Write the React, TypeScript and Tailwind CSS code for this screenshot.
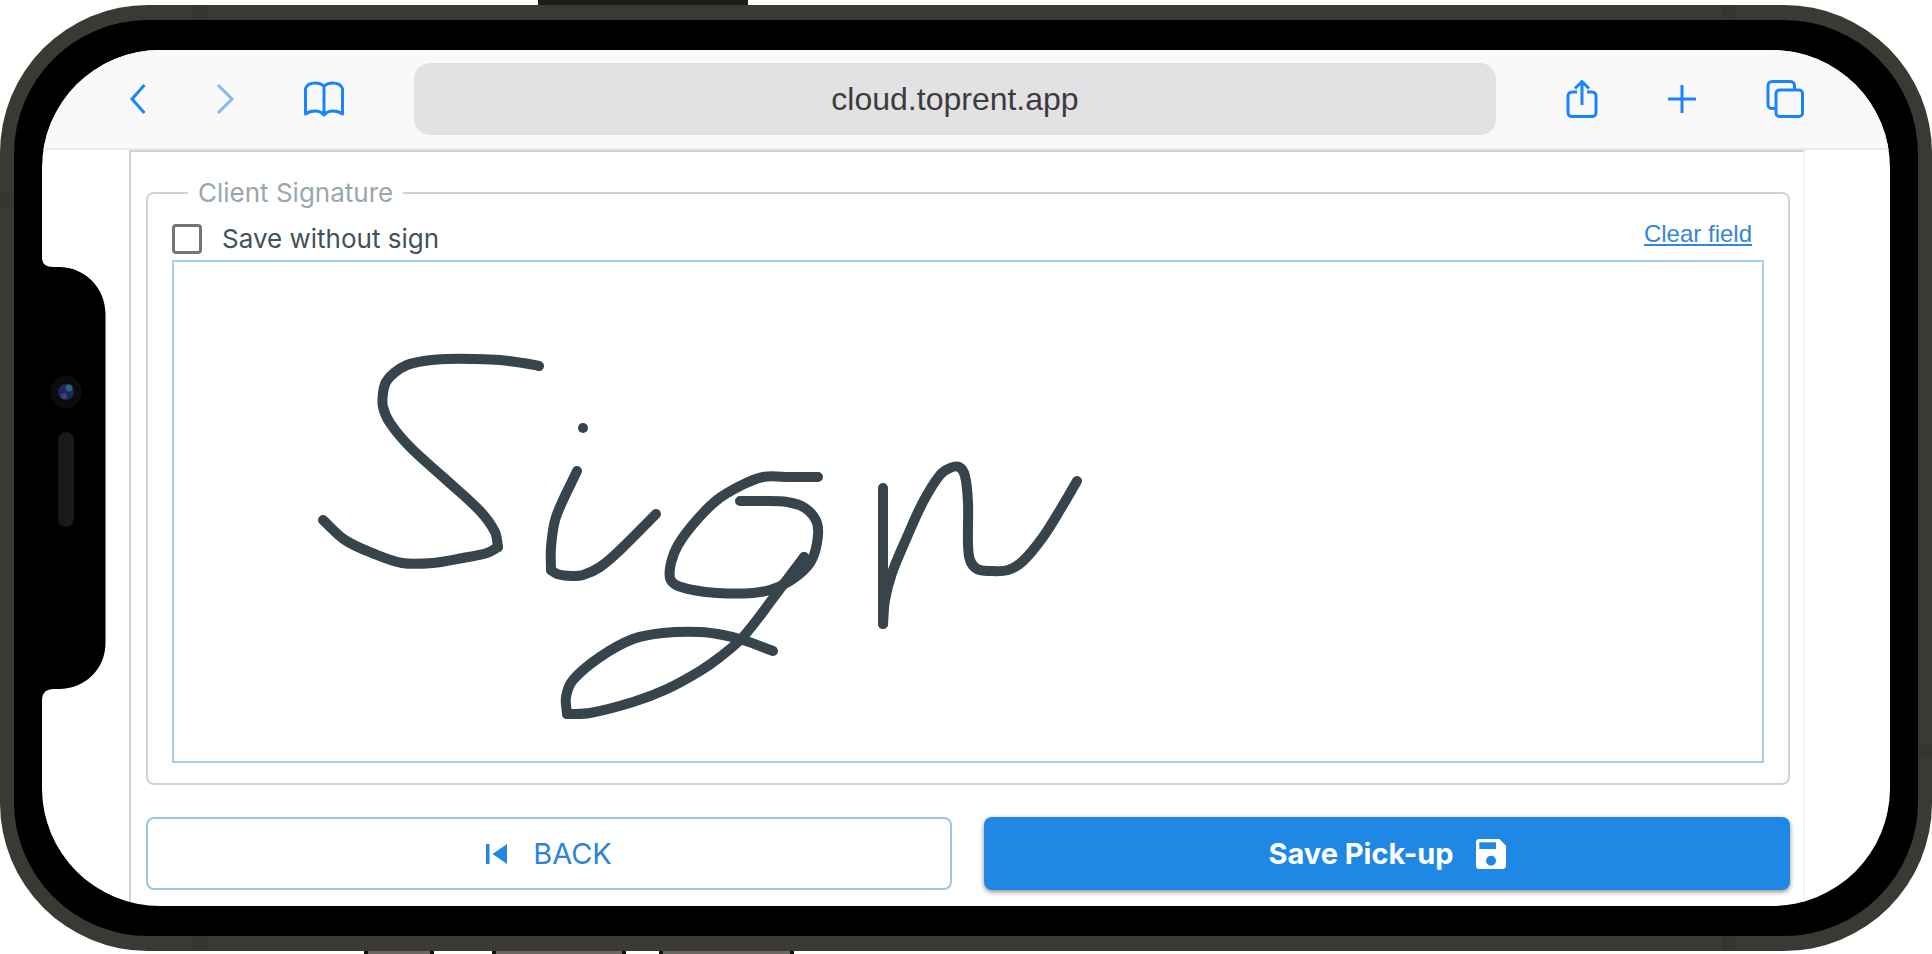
import React from "react";

type Point = [number, number];

const strokes: Point[][] = [
  [[539, 366], [523, 363], [500, 360], [473, 359], [447, 359], [424, 361], [407, 365], [394, 373], [386, 382], [383, 393], [383, 407], [390, 423], [410, 447], [443, 477], [480, 511], [495, 532], [498, 547]],
  [[498, 547], [487, 553], [463, 558], [433, 563], [402, 563], [372, 553], [345, 540], [323, 520]],
  [[577, 471], [556, 517], [551, 547], [551, 570]],
  [[551, 570], [557, 574], [572, 576], [583, 575], [600, 567], [620, 550], [656, 514]],
  [[818, 477], [790, 477], [763, 477], [740, 486], [717, 500], [695, 522], [678, 545], [671, 563], [670, 578], [676, 585], [693, 590], [717, 593], [753, 593], [773, 589], [793, 579], [810, 563], [817, 543], [817, 523], [805, 508], [787, 502], [763, 501], [740, 501]],
  [[804, 557], [774, 597], [743, 637], [720, 657], [700, 671], [667, 689], [633, 702], [590, 713], [567, 714]],
  [[804, 557], [795, 574], [782, 585]],
  [[567, 714], [566, 697], [573, 680], [600, 657], [633, 639], [663, 633], [700, 632], [723, 635], [743, 640], [773, 651]],
  [[883, 488], [883, 624]],
  [[883, 624], [885, 600], [892, 573], [907, 537], [923, 502], [940, 475], [950, 468], [959, 467], [965, 476], [968, 503], [968, 543], [970, 560], [977, 569], [990, 571], [1008, 570], [1023, 561], [1043, 537], [1060, 510], [1077, 481]],
];

function toPath(points: Point[]): string {
  let d = `M${points[0][0]} ${points[0][1]}`;
  for (let i = 0; i < points.length - 1; i++) {
    const a = points[Math.max(i - 1, 0)];
    const b = points[i];
    const c = points[i + 1];
    const e = points[Math.min(i + 2, points.length - 1)];
    const len = Math.hypot(c[0] - b[0], c[1] - b[1]);
    const t1 = len / (Math.hypot(c[0] - a[0], c[1] - a[1]) || 1) / 3;
    const t2 = len / (Math.hypot(e[0] - b[0], e[1] - b[1]) || 1) / 3;
    d += `C${b[0] + (c[0] - a[0]) * t1} ${b[1] + (c[1] - a[1]) * t1} ${c[0] - (e[0] - b[0]) * t2} ${c[1] - (e[1] - b[1]) * t2} ${c[0]} ${c[1]}`;
  }
  return d;
}

function Signature() {
  return (
    <svg
      role="img"
      aria-label="Signature"
      className="block h-full w-full"
      viewBox="174 262 1588 499"
      preserveAspectRatio="xMinYMin meet"
      fill="none"
      stroke="#37444b"
      strokeWidth="10"
      strokeLinecap="round"
      strokeLinejoin="round"
    >
      {strokes.map((points, i) => (
        <path key={i} d={toPath(points)} />
      ))}
      <circle cx="583" cy="428" r="5" fill="#37444b" stroke="none" />
    </svg>
  );
}

function Toolbar() {
  return (
    <header className="flex h-[100px] items-center gap-[70px] border-b-2 border-[#e9eaea] bg-[#f9f9f9] pr-[86px] pl-[88px] text-[#1a84ff]">
      <button aria-label="Back">
        <svg className="block h-[30px] w-4" viewBox="0 0 16 30" fill="none" stroke="currentColor" strokeWidth="3">
          <path d="M14.500 1 2 15l12.500 14" />
        </svg>
      </button>
      <button aria-label="Forward" className="text-[#80b9fb]">
        <svg className="block h-[30px] w-[18px]" viewBox="0 0 18 30" fill="none" stroke="currentColor" strokeWidth="3">
          <path d="M2 1 16 15 2 29" />
        </svg>
      </button>
      <button aria-label="Bookmarks">
        <svg className="block h-9 w-10" viewBox="0 0 40 36" fill="none" stroke="currentColor" strokeWidth="3" strokeLinejoin="round">
          <path d="M20 5.500C18 3 14.500 2 11 2 6.500 2 3 4 1.500 7.500V33c2.500-1.800 6-3 9.500-3s7 1.500 9 4c2-2.500 5.500-4 9-4s7 1.200 9.500 3V7.500C37 4 33.500 2 29 2s-7 1-9 3.500ZM20 5.500V33" />
        </svg>
      </button>
      <input
        type="text"
        aria-label="Address"
        defaultValue="cloud.toprent.app"
        className="h-[72px] min-w-0 flex-1 rounded-2xl bg-[#e2e2e4] text-center font-['Liberation_Sans',sans-serif] text-[32px] text-[#3c3c3d]"
      />
      <button aria-label="Share">
        <svg className="block h-10 w-8" viewBox="0 0 32 40" fill="none" stroke="currentColor" strokeWidth="3">
          <path d="M11 13H6a4 4 0 0 0-4 4v16.500a4 4 0 0 0 4 4h20a4 4 0 0 0 4-4V17a4 4 0 0 0-4-4h-5" />
          <path d="M16 26V2.500M9 9.500l7-7 7 7" />
        </svg>
      </button>
      <button aria-label="New tab">
        <svg className="block h-7 w-7" viewBox="0 0 28 28" fill="none" stroke="currentColor" strokeWidth="3">
          <path d="M14 0v28M0 14h28" />
        </svg>
      </button>
      <button aria-label="Tabs">
        <svg className="block h-10 w-[38px]" viewBox="0 0 38 40" fill="none" stroke="currentColor" strokeWidth="3">
          <rect x="10" y="11" width="26.500" height="26.500" rx="3.500" />
          <path d="M10 29.500H6a4 4 0 0 1-4-4V6.500a4 4 0 0 1 4-4h18.500a4 4 0 0 1 4 4V11" />
        </svg>
      </button>
    </header>
  );
}

function Notch() {
  return (
    <svg aria-hidden="true" className="absolute top-[209px] left-0 h-[440px] w-16" viewBox="0 0 64 440">
      <path
        d="M-1 0H0Q1 8 11 8H17C43 8 63.500 29 63.500 55V384C63.500 410 43 430 17 430H11Q1 430 0 440H-1Z"
        fill="#000"
      />
      <circle cx="24" cy="133" r="16" fill="#0c0c0d" />
      <circle cx="24" cy="133" r="8" fill="#152c54" />
      <circle cx="27" cy="129" r="3.500" fill="#2b5f8a" />
      <circle cx="22" cy="137" r="3" fill="#4c3a80" />
      <rect x="16" y="173" width="16" height="95" rx="8" fill="#191919" />
    </svg>
  );
}

export default function App() {
  return (
    <div className="min-h-screen overflow-hidden bg-white pt-[5px] pb-[3px] font-[Inter,sans-serif]">
      <div className="relative rounded-[148px] bg-[#3a3933] px-[14px] py-[15px]">
        <span className="absolute -top-[5px] left-[538px] h-[5px] w-[210px] bg-[#1c1c1c]" />
        <span className="absolute -bottom-[3px] left-[364px] h-[3px] w-[70px] border-x-4 border-[#111] bg-[#6b6762]" />
        <span className="absolute -bottom-[3px] left-[492px] h-[3px] w-[134px] border-x-4 border-[#111] bg-[#6b6762]" />
        <span className="absolute -bottom-[3px] left-[659px] h-[3px] w-[135px] border-x-4 border-[#111] bg-[#6b6762]" />
        <span className="absolute top-0 left-[193px] h-[15px] w-[14px] bg-[#353630]" />
        <span className="absolute top-0 right-[196px] h-[15px] w-[14px] bg-[#353630]" />
        <span className="absolute bottom-0 left-[193px] h-[15px] w-[14px] bg-[#353630]" />
        <span className="absolute right-[196px] bottom-0 h-[15px] w-[14px] bg-[#353630]" />
        <span className="absolute top-[188px] left-0 h-[14px] w-[14px] bg-[#353630]" />
        <span className="absolute right-0 bottom-[193px] h-[14px] w-[14px] bg-[#353630]" />

        <div className="rounded-[134px] bg-black px-7 py-[30px]">
          <div className="relative overflow-hidden rounded-[118px] bg-white">
            <Toolbar />
            <main className="mr-[85px] ml-[87px] border-x-2 border-t-2 border-t-[#cfd1d2] border-r-[#f5f5f6] border-l-[#cfd1d2] pt-[26px] pr-[13px] pb-4 pl-[15px]">
              <form onSubmit={(e) => e.preventDefault()}>
                <fieldset className="rounded-lg border-2 border-[#ced3d7] px-6 pb-5">
                  <legend className="ml-4 px-[10px] text-[26px] leading-[30px] text-[#98a7af]">Client Signature</legend>
                  <div className="flex h-[52px] items-start justify-between">
                    <label className="flex items-center gap-5 pt-4 text-[26px] leading-[30px] text-[#42525b]">
                      <input type="checkbox" className="h-[30px] w-[30px] appearance-none rounded-[4px] border-3 border-[#757575] bg-white" />
                      Save without sign
                    </label>
                    <a
                      href="#clear"
                      className="mt-3 mr-3 font-['Liberation_Sans',sans-serif] text-2xl leading-7 text-[#3586d4] underline decoration-2 underline-offset-2"
                    >
                      Clear field
                    </a>
                  </div>
                  <div className="h-[503px] border-2 border-[#a9cff2]">
                    <Signature />
                  </div>
                </fieldset>
                <div className="mt-8 grid grid-cols-2 gap-8">
                  <button
                    type="button"
                    className="flex h-[73px] items-center justify-center gap-[26px] rounded-lg border-2 border-[#9cc4eb] text-[29px] text-[#2c84d8]"
                  >
                    <svg className="h-5 w-[21px]" viewBox="0 0 21 20" fill="#1f88e5" aria-hidden="true">
                      <path d="M0 0h3.500v20H0zM21 0v20L6.500 10z" />
                    </svg>
                    BACK
                  </button>
                  <button
                    type="submit"
                    className="flex h-[73px] items-center justify-center gap-[22px] rounded-lg bg-[#1f88e5] text-[29px] font-bold text-white shadow-[0_2px_5px_rgba(0,0,0,0.45)]"
                  >
                    Save Pick-up
                    <svg className="h-[30px] w-[30px]" viewBox="3 3 18 18" fill="currentColor" aria-hidden="true">
                      <path d="M17 3H5a2 2 0 0 0-2 2v14a2 2 0 0 0 2 2h14c1.100 0 2-.9 2-2V7l-4-4zm-5 16a3 3 0 1 1 0-6 3 3 0 0 1 0 6zm3-10H5V5h10v4z" />
                    </svg>
                  </button>
                </div>
              </form>
            </main>
            <Notch />
          </div>
        </div>
      </div>
    </div>
  );
}
